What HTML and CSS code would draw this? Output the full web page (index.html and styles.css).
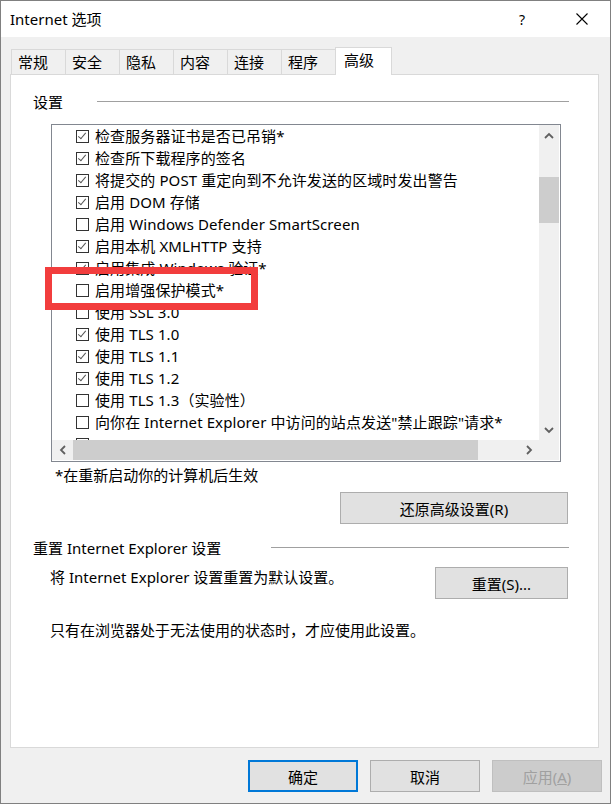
FILE: index.html
```html
<!DOCTYPE html>
<html lang="zh-CN">
<head>
    <meta charset="UTF-8">
    <meta name="viewport" content="width=device-width, initial-scale=1.0">
    <title>Internet 选项</title>
    <link rel="stylesheet" href="styles.css">
</head>
<body>

    <div class="window">
        <!-- Title bar -->
        <div class="titlebar">
            <span class="title">Internet 选项</span>
            <span class="help">?</span>
            <span class="close">
                <svg width="12" height="12" viewBox="0 0 12 12"><path d="M0.5 0.5 L11.5 11.5 M11.5 0.5 L0.5 11.5" stroke="#000" stroke-width="1.1" fill="none"/></svg>
            </span>
        </div>

        <!-- Tabs -->
        <div class="tabs">
            <div class="tab">常规</div>
            <div class="tab">安全</div>
            <div class="tab">隐私</div>
            <div class="tab">内容</div>
            <div class="tab">连接</div>
            <div class="tab">程序</div>
            <div class="tab active">高级</div>
        </div>

        <div class="panel">
            <div class="group-head">
                <span>设置</span>
                <div class="rule"></div>
            </div>

            <div class="listbox">
                <div class="items">
                    <div class="item"><span class="box on"></span>检查服务器证书是否已吊销*</div>
                    <div class="item"><span class="box on"></span>检查所下载程序的签名</div>
                    <div class="item"><span class="box on"></span>将提交的 POST 重定向到不允许发送的区域时发出警告</div>
                    <div class="item"><span class="box on"></span>启用 DOM 存储</div>
                    <div class="item"><span class="box"></span>启用 Windows Defender SmartScreen</div>
                    <div class="item"><span class="box on"></span>启用本机 XMLHTTP 支持</div>
                    <div class="item"><span class="box on"></span>启用集成 Windows 验证*</div>
                    <div class="item"><span class="box"></span>启用增强保护模式*</div>
                    <div class="item"><span class="box"></span>使用 SSL 3.0</div>
                    <div class="item"><span class="box on"></span>使用 TLS 1.0</div>
                    <div class="item"><span class="box on"></span>使用 TLS 1.1</div>
                    <div class="item"><span class="box on"></span>使用 TLS 1.2</div>
                    <div class="item"><span class="box"></span>使用 TLS 1.3（实验性）</div>
                    <div class="item"><span class="box"></span>向你在 Internet Explorer 中访问的站点发送"禁止跟踪"请求*</div>
                    <div class="item"><span class="box"></span></div>
                </div>

                <!-- vertical scrollbar -->
                <div class="vscroll">
                    <div class="arrow">
                        <svg width="10" height="7" viewBox="0 0 10 7"><polyline points="1,6 5,2 9,6" fill="none" stroke="#606060" stroke-width="1.8"/></svg>
                    </div>
                    <div class="vthumb"></div>
                    <div class="fill"></div>
                    <div class="arrow">
                        <svg width="10" height="7" viewBox="0 0 10 7"><polyline points="1,1 5,5 9,1" fill="none" stroke="#606060" stroke-width="1.8"/></svg>
                    </div>
                </div>

                <!-- horizontal scrollbar -->
                <div class="hscroll">
                    <div class="arrow">
                        <svg width="7" height="10" viewBox="0 0 7 10"><polyline points="6,1 2,5 6,9" fill="none" stroke="#606060" stroke-width="1.8"/></svg>
                    </div>
                    <div class="hthumb"></div>
                    <div class="fill"></div>
                    <div class="arrow">
                        <svg width="7" height="10" viewBox="0 0 7 10"><polyline points="1,1 5,5 1,9" fill="none" stroke="#606060" stroke-width="1.8"/></svg>
                    </div>
                </div>
                <div class="corner"></div>
            </div>

            <p class="note">*在重新启动你的计算机后生效</p>
            <button class="btn restore">还原高级设置(R)</button>

            <div class="group-head second">
                <span>重置 Internet Explorer 设置</span>
                <div class="rule"></div>
            </div>

            <div class="reset-row">
                <p>将 Internet Explorer 设置重置为默认设置。</p>
                <button class="btn reset">重置(S)...</button>
            </div>

            <p class="warn">只有在浏览器处于无法使用的状态时，才应使用此设置。</p>
        </div>

        <!-- Dialog buttons -->
        <div class="footer">
            <button class="btn focus">确定</button>
            <button class="btn">取消</button>
            <button class="btn disabled">应用(<u>A</u>)</button>
        </div>

        <!-- highlight drawn over the list -->
        <div class="highlight"></div>
    </div>

</body>
</html>
```

FILE: styles.css
```css
body {
    margin: 0;
    padding: 0;
    background: #fff;
    font-family: "Noto Sans", "Noto Sans CJK SC", sans-serif;
    font-size: 15px;
    color: #000;
}

p {
    margin: 0;
}

.window {
    position: relative;
    width: 611px;
    height: 804px;
    box-sizing: border-box;
    border: 1px solid #808080;
    background: #f0f0f0;
    display: flex;
    flex-direction: column;
}

/* title bar */
.titlebar {
    height: 36px;
    background: #fff;
    display: flex;
    align-items: center;
    padding-left: 9px;
}

.title {
    flex: 1;
    line-height: 20px;
}

.help {
    width: 20px;
    text-align: center;
    margin-right: 40px;
    font-size: 14px;
}

.close {
    width: 20px;
    margin-right: 18px;
    display: flex;
    justify-content: center;
}

/* tabs */
.tabs {
    display: flex;
    align-items: flex-end;
    height: 28px;
    margin-top: 10px;
    padding-left: 10px;
}

.tab {
    width: 55px;
    height: 26px;
    box-sizing: border-box;
    margin-right: -1px;
    padding-left: 6px;
    border: 1px solid #d9d9d9;
    border-bottom: none;
    background: #f0f0f0;
    line-height: 24px;
}

.tab.active {
    position: relative;
    z-index: 1;
    width: 57px;
    height: 28px;
    padding-left: 8px;
    background: #fff;
    line-height: 24px;
}

.panel {
    margin: -1px 0 0 9px;
    width: 589px;
    height: 674px;
    box-sizing: border-box;
    border: 1px solid #d9d9d9;
    background: #fff;
    display: flex;
    flex-direction: column;
}

.group-head {
    display: flex;
    align-items: center;
    height: 20px;
    margin: 16px 29px 0 22px;
}

.group-head .rule {
    flex: 1;
    height: 1px;
    background: #a0a0a0;
    margin-left: 34px;
}

.group-head.second {
    margin-top: 13px;
}

.group-head.second .rule {
    margin-left: 50px;
}

/* list box with scrollbars */
.listbox {
    margin: 13px 0 0 40px;
    width: 510px;
    height: 338px;
    box-sizing: border-box;
    border: 1px solid #828790;
    padding: 0 1px 1px 0;
    display: grid;
    grid-template-columns: 487px 20px;
    grid-template-rows: 315px 20px;
}

.items {
    overflow: hidden;
}

.item {
    height: 22px;
    display: flex;
    align-items: center;
    padding-left: 24px;
    white-space: nowrap;
    line-height: 22px;
    letter-spacing: 0.1px;
}

.box {
    position: relative;
    flex: none;
    width: 13px;
    height: 13px;
    box-sizing: border-box;
    border: 1px solid #333;
    margin-right: 6px;
}

.box.on::after {
    content: "";
    position: absolute;
    left: 3px;
    top: 0px;
    width: 3px;
    height: 7px;
    border-right: 1.5px solid #555;
    border-bottom: 1.5px solid #555;
    transform: rotate(40deg);
}

.vscroll {
    background: #f0f0f0;
    display: flex;
    flex-direction: column;
}

.hscroll {
    background: #f0f0f0;
    display: flex;
}

.corner {
    background: #f0f0f0;
}

.arrow {
    width: 20px;
    height: 20px;
    flex: none;
    display: flex;
    align-items: center;
    justify-content: center;
}

.vthumb {
    margin-top: 32px;
    height: 46px;
    background: #cdcdcd;
}

.hthumb {
    margin-left: 1px;
    width: 405px;
    background: #cdcdcd;
}

.fill {
    flex: 1;
}

.note {
    margin: 3px 0 0 44px;
    line-height: 20px;
}

.btn {
    font-family: "Noto Sans", "Noto Sans CJK SC", sans-serif;
    font-size: 15px;
    color: #000;
    background: #e1e1e1;
    border: 1px solid #adadad;
    padding: 0;
    height: 32px;
}

.restore {
    align-self: flex-end;
    width: 228px;
    margin: 7px 30px 0 0;
}

.reset-row {
    display: flex;
    justify-content: space-between;
    margin-top: 10px;
    padding-left: 39px;
}

.reset-row p {
    line-height: 20px;
}

.reset {
    width: 133px;
    margin-right: 30px;
}

.warn {
    margin: 21px 0 0 39px;
    line-height: 20px;
}

/* dialog buttons */
.footer {
    display: flex;
    justify-content: flex-end;
    gap: 12px;
    margin-top: 12px;
    padding-right: 8px;
}

.footer .btn {
    width: 110px;
}

.btn.focus {
    border: 2px solid #0078d7;
}

.btn.disabled {
    background: #cccccc;
    border-color: #bfbfbf;
    color: #a0a0a0;
}

.highlight {
    position: absolute;
    left: 44px;
    top: 266px;
    width: 213px;
    height: 43px;
    box-sizing: border-box;
    border: 7px solid #f23d3d;
}
```
